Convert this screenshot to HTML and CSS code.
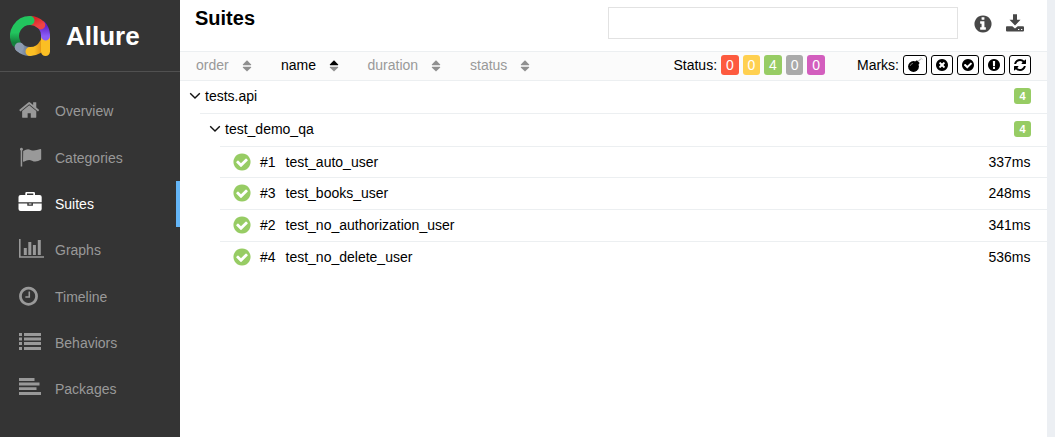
FILE: index.html
```html
<!DOCTYPE html>
<html lang="en">
<head>
<meta charset="utf-8">
<title>Allure Report</title>
<link rel="stylesheet" href="styles.css">
</head>
<body>
<svg class="defs" width="0" height="0">
  <symbol id="check" viewBox="0 0 1792 1792"><path d="M1412 734q0-28-18-46l-91-90q-19-19-45-19t-45 19l-408 407-226-226q-19-19-45-19t-45 19l-91 90q-18 18-18 46 0 27 18 45l362 362q19 19 45 19 27 0 46-19l543-543q18-18 18-45zm252 162q0 209-103 385.5t-279.5 279.5-385.5 103-385.5-103-279.5-279.5-103-385.5 103-385.5 279.5-279.5 385.5-103 385.5 103 279.5 279.5 103 385.5z"/></symbol>
  <symbol id="sort" viewBox="0 0 10 12"><path class="up" d="M5 0.2 9.2 4.6Q9.4 5.2 8.8 5.2H1.2Q.6 5.2.8 4.6Z"/><path class="down" d="M5 11.6 9.2 7.4Q9.4 6.8 8.8 6.8H1.2Q.6 6.8.8 7.4Z"/></symbol>
  <symbol id="chevron" viewBox="0 0 12 8"><path d="M1.2 1.2 6 6 10.8 1.2" fill="none" stroke="#111" stroke-width="1.4"/></symbol>
</svg>
<div class="app">
  <aside class="side">
    <div class="brand">
      <svg class="logo" viewBox="0 0 40 40">
        <defs>
          <linearGradient id="g1" x1="0" y1="0" x2="0" y2="1"><stop offset=".55" stop-color="#22c55e"/><stop offset="1" stop-color="#15803d"/></linearGradient>
          <linearGradient id="g2" x1="0" y1="0" x2="1" y2="1"><stop offset="0" stop-color="#d92626"/><stop offset="1" stop-color="#ef4444"/></linearGradient>
          <linearGradient id="g3" x1="0" y1="0" x2="0" y2="1"><stop offset="0" stop-color="#6020c8"/><stop offset="1" stop-color="#8b5cf6"/></linearGradient>
          <linearGradient id="g4" x1="0" y1="0" x2="1" y2="0"><stop offset="0" stop-color="#94a3b8"/><stop offset="1" stop-color="#64748b"/></linearGradient>
          <linearGradient id="g5" x1="0" y1="0" x2="1" y2="0"><stop offset=".3" stop-color="#fbbf24"/><stop offset="1" stop-color="#d98510"/></linearGradient>
        </defs>
        <g fill="none" stroke-width="9" stroke-linecap="round">
          <path d="M9.2 31A15.5 15.5 0 0 0 20 35.5" stroke="url(#g4)"/>
          <path d="M20 35.5A15.5 15.5 0 0 0 34 27" stroke="url(#g5)"/>
        </g>
        <path d="M31 20H40V35.5a4.5 4.5 0 0 1-9 0Z" fill="#fbbf24"/>
        <g fill="none" stroke-width="9" stroke-linecap="round">
          <path d="M32 9.6A15.5 15.5 0 0 1 35.5 20" stroke="url(#g3)"/>
          <path d="M20 4.5A15.5 15.5 0 0 1 30.8 8.9" stroke="url(#g2)"/>
          <path d="M20 4.5A15.500 15.500 0 0 0 6 26.500" stroke="url(#g1)"/>
          <path d="M9.200 31L9.400 31.200" stroke="#8d9bb0"/>
        </g>
      </svg>
      <span class="brand-name">Allure</span>
    </div>
    <nav class="nav">
      <a class="item"><svg class="ico" viewBox="0 0 28 22"><path transform="translate(1.2 0) scale(.01228)" d="M1472 992v480q0 26-19 45t-45 19h-384v-384h-256v384h-384q-26 0-45-19t-19-45v-480q0-1 .5-3t.5-3l575-474 575 474q1 2 1 6zm223-69l-62 74q-8 9-21 11h-3q-13 0-21-7l-692-577-692 577q-12 8-24 7-13-2-21-11l-62-74q-8-10-7-23.5t11-21.5l719-599q32-26 76-26t76 26l244 204v-195q0-14 9-23t23-9h192q14 0 23 9t9 23v408l219 182q10 8 11 21.5t-7 23.5z"/></svg>Overview</a>
      <a class="item"><svg class="ico" viewBox="0 0 28 22"><path d="M4.4 1.8a1.5 1.5 0 0 1 .8 2.8V20.6H3.7V4.6A1.5 1.5 0 0 1 4.4 1.8ZM6.2 5Q10.500 2.200 13.500 3.900Q17 5.600 23.300 3.100Q24.200 2.900 24.200 3.800V13.500Q19 17 15 14.700Q11.500 13 6.800 15.700Q6 16 6 15Z"/></svg>Categories</a>
      <a class="item active"><svg class="ico" viewBox="0 0 28 22"><path fill-rule="evenodd" d="M8.300 3V1.300Q8.300 0 9.600 0H16.700Q18 0 18 1.300V3H22.600Q24.700 3 24.700 5.100V10.200H1.500V5.100Q1.500 3 3.600 3ZM10 3H16.300V1.600H10ZM1.500 11.400H10.300V13.800H15.900V11.400H24.700V16.900Q24.700 19 22.600 19H3.600Q1.500 19 1.500 16.900ZM11.700 11.400H14.500V12.600H11.700Z"/></svg>Suites</a>
      <a class="item"><svg class="ico" viewBox="0 0 28 22"><path d="M2 1H3.600V18.200H27V19.800H2ZM6.800 10H9.800V17H6.800ZM11.300 4H14.300V17H11.300ZM15.900 7H18.900V17H15.900ZM20.800 2H23.800V17H20.800Z"/></svg>Graphs</a>
      <a class="item"><svg class="ico" viewBox="0 0 28 22"><path transform="translate(.5 .2) scale(.01228)" d="M1024 544v448q0 14-9 23t-23 9h-320q-14 0-23-9t-9-23v-64q0-14 9-23t23-9h224v-352q0-14 9-23t23-9h64q14 0 23 9t9 23zm416 352q0-148-73-273t-198-198-273-73-273 73-198 198-73 273 73 273 198 198 273 73 273-73 198-198 73-273zm224 0q0 209-103 385.500t-279.500 279.500-385.500 103-385.500-103-279.500-279.500-103-385.500 103-385.500 279.500-279.500 385.500-103 385.500 103 279.500 279.500 103 385.500z"/></svg>Timeline</a>
      <a class="item"><svg class="ico" viewBox="0 0 28 22"><path d="M2 2H5V5H2ZM7 2H24V5H7ZM2 6.500H5V9.500H2ZM7 6.500H24V9.500H7ZM2 11H5V14H2ZM7 11H24V14H7ZM2 16H5V19H2ZM7 16H24V19H7Z"/></svg>Behaviors</a>
      <a class="item"><svg class="ico" viewBox="0 0 28 22"><path d="M2 1H17.500V4H2ZM2 5.500H22.500V8.500H2ZM2 10.200H19.500V13H2ZM2 15H24V18H2Z"/></svg>Packages</a>
    </nav>
  </aside>
  <main class="main">
    <header class="head">
      <h1 class="title">Suites</h1>
      <input class="search" type="text" aria-label="Search">
      <svg class="info" viewBox="0 0 1792 1792"><path d="M1152 1376v-160q0-14-9-23t-23-9h-96v-512q0-14-9-23t-23-9h-320q-14 0-23 9t-9 23v160q0 14 9 23t23 9h96v320h-96q-14 0-23 9t-9 23v160q0 14 9 23t23 9h448q14 0 23-9t9-23zm-128-896v-160q0-14-9-23t-23-9h-192q-14 0-23 9t-9 23v160q0 14 9 23t23 9h192q14 0 23-9t9-23zm640 416q0 209-103 385.500t-279.500 279.500-385.500 103-385.500-103-279.500-279.500-103-385.500 103-385.500 279.500-279.500 385.500-103 385.500 103 279.500 279.500 103 385.500z"/></svg>
      <svg class="download" viewBox="0 0 20 18"><path fill-rule="evenodd" d="M8 .3H12V5.800H15.500L10 11.500 4.500 5.800H8ZM1.800 12.300H7.300L10 14.600 12.700 12.300H18Q19 12.300 19 13.400V16.400Q19 17.500 18 17.500H2Q1 17.500 1 16.400V13.400Q1 12.300 1.800 12.300ZM13 15V16H14.300V15ZM16 15V16H17.300V15Z"/></svg>
    </header>
    <div class="bar">
      <span class="sorter order">order<svg class="sort"><use href="#sort"/></svg></span>
      <span class="sorter name">name<svg class="sort" viewBox="0 0 10 12"><path fill="#000" d="M5 0.200 9.200 4.600Q9.400 5.200 8.800 5.200H1.200Q.6 5.200.8 4.600Z"/><path d="M5 11.600 9.200 7.400Q9.400 6.800 8.800 6.800H1.200Q.6 6.800.8 7.400Z"/></svg></span>
      <span class="sorter duration">duration<svg class="sort"><use href="#sort"/></svg></span>
      <span class="sorter">status<svg class="sort"><use href="#sort"/></svg></span>
      <div class="statuses">Status:
        <span class="st failed">0</span><span class="st broken">0</span><span class="st passed">4</span><span class="st skipped">0</span><span class="st unknown">0</span>
      </div>
      <div class="marks"><span class="marks-label">Marks:</span>
        <span class="mark bomb"><svg class="bomb-ico" viewBox="0 0 16 16"><circle cx="6.500" cy="9.500" r="5.400"/><path d="M8 4.800 9.900 3.200 12.700 6 11 7.900Z"/><path d="M11.300 4.400Q12.200 2.400 13.600 2.600" fill="none" stroke="#777" stroke-width=".8"/><path d="M13.800.6V1.400M15.400 2.500H14.800M15.100 1.100 14.600 1.600" stroke="#888" stroke-width=".7"/><path d="M3.300 8.800Q3.700 6.800 5.900 6.400" fill="none" stroke="#999" stroke-width=".8"/></svg></span>
        <span class="mark"><svg viewBox="0 0 1792 1792"><path d="M1277 1122q0-26-19-45l-181-181 181-181q19-19 19-45 0-27-19-46l-90-90q-19-19-46-19-26 0-45 19l-181 181-181-181q-19-19-45-19-27 0-46 19l-90 90q-19 19-19 46 0 26 19 45l181 181-181 181q-19 19-19 45 0 27 19 46l90 90q19 19 46 19 26 0 45-19l181-181 181 181q19 19 45 19 27 0 46-19l90-90q19-19 19-46zm387-226q0 209-103 385.500t-279.500 279.500-385.500 103-385.500-103-279.500-279.500-103-385.500 103-385.500 279.500-279.500 385.500-103 385.500 103 279.500 279.500 103 385.500z"/></svg></span>
        <span class="mark"><svg><use href="#check"/></svg></span>
        <span class="mark"><svg viewBox="0 0 1792 1792"><path d="M896 128q209 0 385.500 103t279.500 279.500 103 385.500-103 385.500-279.500 279.500-385.500 103-385.500-103-279.500-279.500-103-385.500 103-385.500 279.500-279.500 385.500-103zm128 1247v-190q0-14-9-23.500t-22-9.500h-192q-13 0-23 10t-10 23v190q0 13 10 23t23 10h192q13 0 22-9.500t9-23.500zm-2-344l18-621q0-12-10-18-10-8-24-8h-220q-14 0-24 8-10 6-10 18l17 621q0 10 10 17.500t24 7.500h185q14 0 23.500-7.500t10.500-17.500z"/></svg></span>
        <span class="mark"><svg viewBox="0 0 1792 1792"><path d="M1639 1056q0 5-1 7-64 268-268 434.500t-478 166.500q-146 0-282.500-55t-243.500-157l-129 129q-19 19-45 19t-45-19-19-45v-448q0-26 19-45t45-19h448q26 0 45 19t19 45-19 45l-137 137q71 66 161 102t187 36q134 0 250-65t186-179q11-17 53-117 8-23 30-23h192q13 0 22.500 9.500t9.500 22.500zm25-800v448q0 26-19 45t-45 19h-448q-26 0-45-19t-19-45 19-45l138-138q-148-137-349-137-134 0-250 65t-186 179q-11 17-53 117-8 23-30 23h-199q-13 0-22.500-9.500t-9.500-22.500v-7q65-268 270-434.500t480-166.500q146 0 284 55.500t245 156.500l130-129q19-19 45-19t45 19 19 45z"/></svg></span>
      </div>
    </div>
    <section class="tree">
      <div class="group"><svg class="chev"><use href="#chevron"/></svg>tests.api<span class="count">4</span></div>
      <div class="group nested"><svg class="chev"><use href="#chevron"/></svg>test_demo_qa<span class="count">4</span></div>
      <div class="test first"><svg class="ok"><use href="#check"/></svg><span class="num">#1</span>test_auto_user<span class="time">337ms</span></div>
      <div class="test"><svg class="ok"><use href="#check"/></svg><span class="num">#3</span>test_books_user<span class="time">248ms</span></div>
      <div class="test"><svg class="ok"><use href="#check"/></svg><span class="num">#2</span>test_no_authorization_user<span class="time">341ms</span></div>
      <div class="test"><svg class="ok"><use href="#check"/></svg><span class="num">#4</span>test_no_delete_user<span class="time">536ms</span></div>
    </section>
  </main>
</div>
</body>
</html>
```
FILE: styles.css
```css
* { box-sizing: border-box; }
body { margin: 0; font: 14px/20px "Liberation Sans", Arial, sans-serif; color: #000; background: #eceff3; overflow: hidden; }
.defs { position: absolute; }
svg { display: block; flex: none; }
.app { display: flex; height: 437px; padding-right: 8px; }

.side { width: 180px; background: #343434; color: #999; }
.brand { display: flex; align-items: center; gap: 16px; height: 72px; padding-left: 10px; border-bottom: 1px solid #505050; }
.logo { width: 40px; height: 40px; }
.brand-name { color: #fff; font-size: 26px; line-height: 32px; font-weight: bold; }
.nav { padding-top: 16.33px; }
.item { display: flex; align-items: center; gap: 10px; height: 46.33px; padding-left: 17px; }
.ico { width: 28px; height: 22px; margin-bottom: 2px; fill: #999; }
.active { color: #fff; border-right: 4px solid #64b5f6; }
.active .ico { fill: #fff; }

.main { flex: 1; background: #fff; }
.head { display: flex; height: 51px; padding: 7px 22px 0 15px; }
.title { flex: 1; margin: 0; font-size: 20px; line-height: 22px; }
.search { width: 350px; height: 32px; padding: 0 8px; border: 1px solid #e2e2e2; outline: 0; background: #fff; }
.info { width: 20px; height: 20px; margin: 7px 0 0 15px; fill: #484848; }
.download { width: 20px; height: 18px; margin: 7px 0 0 12px; fill: #484848; }

.bar { display: flex; align-items: center; height: 30px; padding: 0 16px 2px 16px; border: solid #eceff1; border-width: 1px 0; background: #fbfbfb; }
.sorter { display: flex; align-items: center; color: #999; }
.sort { width: 10px; height: 12px; margin: 2px 0 0 13px; fill: #8f8f8f; }
.order { width: 85px; }
.name { width: 86.500px; color: #000; }
.duration { width: 102.500px; }
.statuses { display: flex; align-items: center; gap: 4px; margin-left: auto; }
.st { width: 17.600px; height: 20px; border-radius: 3px; color: #fff; text-align: center; }
.failed { background: #fd5a3e; }
.broken { background: #ffd050; }
.passed { background: #97cc64; }
.skipped { background: #aaa; }
.unknown { background: #d35ebe; }
.marks { display: flex; align-items: center; gap: 4px; margin-left: 32px; }
.mark { display: flex; align-items: center; justify-content: center; width: 22px; height: 20px; border: 1px solid #000; border-radius: 3px; background: #fff; }
.mark svg { width: 14px; height: 14px; }
.bomb { width: 24px; }
.mark .bomb-ico { width: 16px; height: 16px; }

.group { display: flex; align-items: center; height: 33px; margin-left: 20px; padding: 0 16px 2px 0; border-bottom: 1px solid #eceff1; }
.nested { margin-left: 40px; }
.chev { width: 12px; height: 8px; margin: 0 4px 0 -11px; }
.count { width: 17px; height: 16px; margin-left: auto; border-radius: 3px; background: #97cc64; color: #fff; font-size: 11px; line-height: 16px; font-weight: bold; text-align: center; }
.test { display: flex; align-items: center; height: 32px; margin-left: 40px; padding: 0 16.500px 1px 12px; border-bottom: 1px solid #eceff1; }
.first { height: 31px; padding-bottom: 0; }
.test:last-child { padding-bottom: 2px; border-bottom: 0; }
.ok { width: 20px; height: 20px; margin-right: 8px; fill: #97cc64; }
.num { width: 25.500px; }
.time { margin-left: auto; }
```
